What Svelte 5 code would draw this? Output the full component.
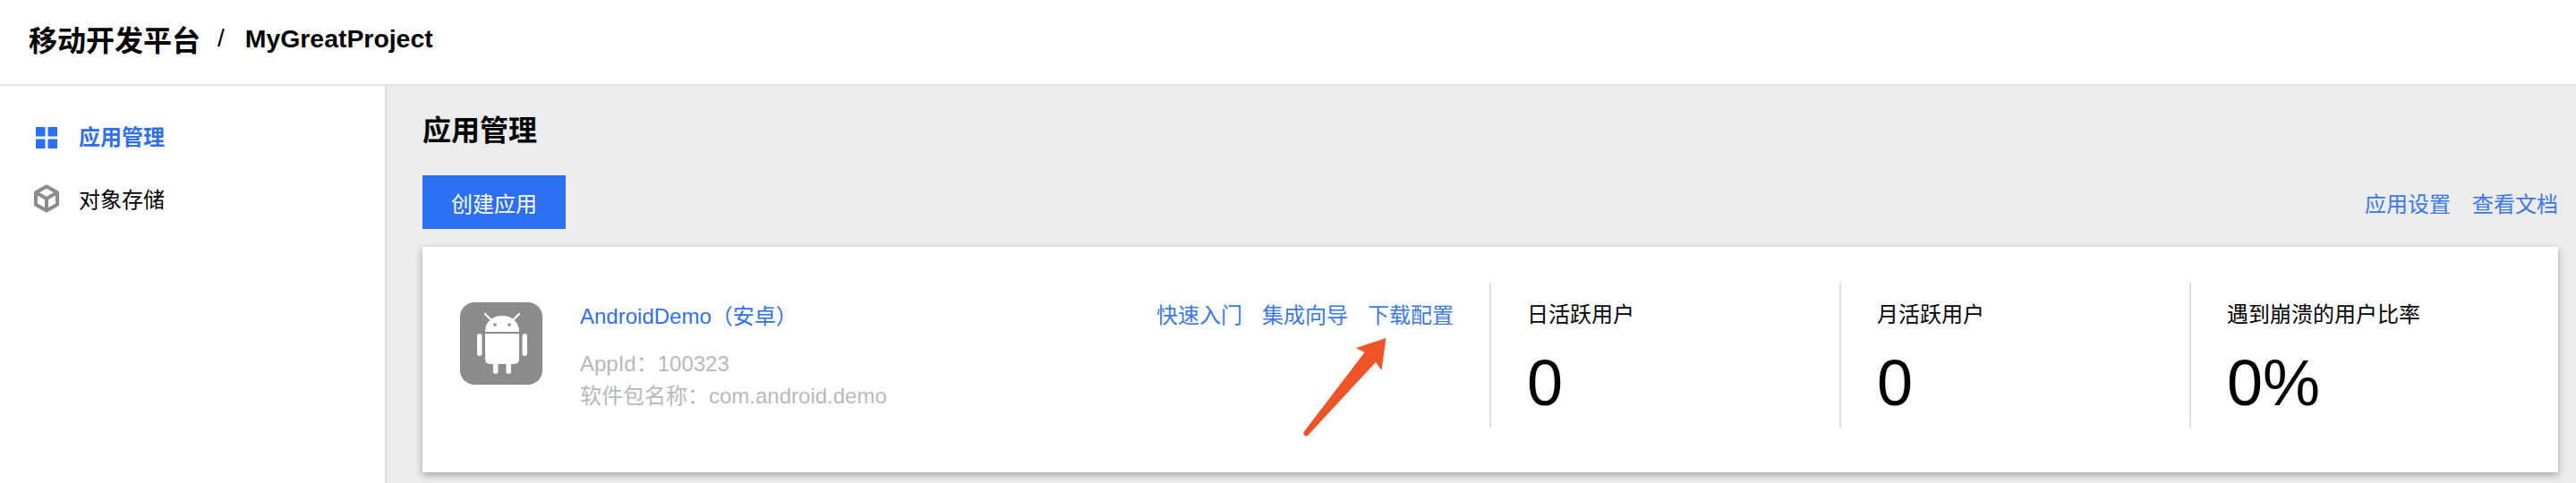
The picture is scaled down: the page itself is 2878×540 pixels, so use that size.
<script>
    const links = ["快速入门", "集成向导", "下载配置"];
    const stats = [
        { label: "日活跃用户", value: "0" },
        { label: "月活跃用户", value: "0" },
        { label: "遇到崩溃的用户比率", value: "0%" },
    ];
</script>

<div class="page">
    <header>
        <span class="brand">移动开发平台</span>
        <span class="slash">/</span>
        <span class="project">MyGreatProject</span>
    </header>

    <div class="body">
        <nav>
            <div class="nav-item active">
                <svg class="grid-icon" width="24" height="24" viewBox="0 0 24 24">
                    <rect width="10.5" height="10.5" />
                    <rect x="13.5" width="10.5" height="10.5" />
                    <rect y="13.5" width="10.5" height="10.5" />
                    <rect x="13.5" y="13.5" width="10.5" height="10.5" />
                </svg>
                应用管理
            </div>
            <div class="nav-item">
                <svg class="cube-icon" width="28" height="32" viewBox="0 0 28 32">
                    <path d="M14 2.5 26 9.3V22.7L14 29.5 2 22.7V9.3ZM2 9.3 14 16 26 9.3M14 16V29.5" />
                </svg>
                对象存储
            </div>
        </nav>

        <main>
            <h1>应用管理</h1>
            <div class="toolbar">
                <button>创建应用</button>
                <div class="links">
                    <span>应用设置</span>
                    <span>查看文档</span>
                </div>
            </div>

            <section class="card">
                <div class="app">
                    <svg class="app-icon" width="92" height="92" viewBox="14 18 92 92">
                        <rect x="14" y="18" width="92" height="92" rx="16" fill="#8b8b8b" />
                        <path d="M42 31 49 38M80 31 73 38" stroke="#fff" stroke-width="2.4" stroke-linecap="round" />
                        <path d="M42 51C42 40 50 33 61 33S80 40 80 51Z" fill="#fff" />
                        <circle cx="53" cy="43" r="1.8" fill="#8b8b8b" />
                        <circle cx="69" cy="43" r="1.8" fill="#8b8b8b" />
                        <path d="M42 53H80V82A5 5 0 0 1 75 87H47A5 5 0 0 1 42 82Z" fill="#fff" />
                        <rect x="33" y="53" width="5.5" height="25" rx="2.7" fill="#fff" />
                        <rect x="83.5" y="53" width="5.5" height="25" rx="2.7" fill="#fff" />
                        <rect x="51" y="84" width="5.5" height="14" rx="2.7" fill="#fff" />
                        <rect x="65.5" y="84" width="5.5" height="14" rx="2.7" fill="#fff" />
                    </svg>
                    <div class="info">
                        <div class="app-name">AndroidDemo（安卓）</div>
                        <div class="meta">AppId：100323</div>
                        <div class="meta">软件包名称：com.android.demo</div>
                    </div>
                    <div class="app-links">
                        {#each links as link}
                            <span>{link}</span>
                        {/each}
                    </div>
                </div>

                {#each stats as stat}
                    <div class="stat">
                        <div class="stat-label">{stat.label}</div>
                        <div class="stat-value">{stat.value}</div>
                    </div>
                {/each}

                <!-- annotation arrow drawn over the card -->
                <svg class="arrow" width="100" height="116" viewBox="0 0 100 116">
                    <path d="M94.5 2 61 13 70.5 18 3 106.5C1 110 4.5 113 7.5 110.5L83 29 89.5 38Z" fill="#ee5427" />
                </svg>
            </section>
        </main>
    </div>
</div>

<style>
    :global(body) {
        margin: 0;
        background: #fff;
        overflow: hidden;
    }

    .page {
        height: 540px;
        display: flex;
        flex-direction: column;
        font-family: "Liberation Sans", "Noto Sans CJK SC", sans-serif;
        color: #000;
        font-size: 24px;
    }

    header {
        height: 86px;
        flex: none;
        display: flex;
        align-items: center;
        padding: 0 0 8px 32px;
        border-bottom: 2px solid #e3e3e3;
        font-weight: 700;
    }

    .brand {
        font-size: 32px;
    }

    .slash {
        font-size: 28px;
        font-weight: 400;
        margin: 0 23px 0 19px;
    }

    .project {
        font-size: 28.4px;
    }

    .body {
        flex: 1;
        display: flex;
        min-height: 0;
    }

    nav {
        width: 430px;
        flex: none;
        border-right: 2px solid #dedede;
        padding-top: 20px;
    }

    .nav-item {
        height: 70px;
        display: flex;
        align-items: center;
        padding-left: 38px;
        gap: 22px;
    }

    .nav-item.active {
        color: #2f6fed;
        font-weight: 700;
    }

    .grid-icon {
        margin: 6px 2px 0;
        fill: #2d6ff2;
    }

    .cube-icon {
        margin-top: 2px;
        fill: none;
        stroke: #8c8c8c;
        stroke-width: 4;
        stroke-linejoin: round;
    }

    main {
        flex: 1;
        background: #ececec;
        padding: 28px 20px 0 40px;
        min-width: 0;
    }

    h1 {
        margin: 0 0 28px;
        font-size: 32px;
        line-height: 44px;
        font-weight: 700;
    }

    .toolbar {
        display: flex;
        justify-content: space-between;
        align-items: center;
        margin-bottom: 20px;
    }

    button {
        width: 160px;
        height: 60px;
        border: 0;
        padding: 0;
        background: #2d6ff2;
        color: #fff;
        font: inherit;
    }

    .links {
        display: flex;
        gap: 24px;
        color: #3a78e6;
    }

    .card {
        position: relative;
        height: 252px;
        box-sizing: border-box;
        display: flex;
        padding: 40px 21px 50px 42px;
        background: #fff;
        box-shadow: 0 3px 8px rgba(0, 0, 0, 0.3);
    }

    .app {
        flex: 1;
        display: flex;
        align-items: flex-start;
        padding-top: 22px;
        min-width: 0;
    }

    .app-icon {
        flex: none;
    }

    .info {
        margin-left: 42px;
    }

    .app-name {
        color: #2f6fed;
        line-height: 30px;
        margin: 1px 0 20px;
    }

    .meta {
        color: #b9b9b9;
        line-height: 36px;
    }

    .app-links {
        display: flex;
        gap: 22px;
        color: #3a78e6;
        margin-left: auto;
        margin-right: 40px;
        line-height: 30px;
    }

    .stat {
        width: 391px;
        flex: none;
        box-sizing: border-box;
        border-left: 2px solid #dedede;
        padding-left: 40px;
    }

    .stat-label {
        line-height: 30px;
        margin-top: 21px;
    }

    .stat-value {
        font-size: 72px;
        line-height: 80px;
        margin-top: 21px;
    }

    .arrow {
        position: absolute;
        left: 982px;
        top: 100px;
    }
</style>
